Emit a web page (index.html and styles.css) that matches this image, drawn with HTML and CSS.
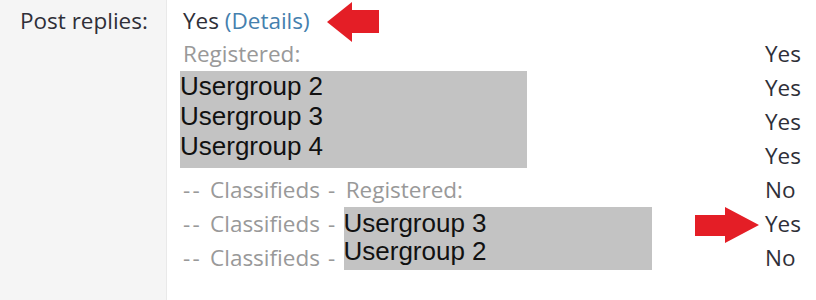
FILE: index.html
```html
<!DOCTYPE html>
<html lang="en">
<head>
<meta charset="utf-8">
<title>Post replies permissions</title>
<link rel="stylesheet" href="styles.css">
</head>
<body>
<div class="perm">
  <div class="perm-label">Post replies:</div>
  <div class="perm-body">
    <div class="perm-head">
      Yes <a class="details" href="#">(Details)</a>
      <svg class="arrow arrow-left" width="52" height="40" viewBox="0 0 52 40" aria-hidden="true">
        <path d="M0 20 L25 0 L25 8 L52 8 L52 31 L25 31 L25 40 Z" fill="#e41e26"/>
      </svg>
    </div>
    <div class="rows">
      <div class="name">Registered:</div><div class="val">Yes</div>
      <div class="name">
        <span class="mask mask-a">Usergroup 2<br>Usergroup 3<br>Usergroup 4</span>
      </div><div class="val">Yes</div>
      <div class="name"></div><div class="val">Yes</div>
      <div class="name"></div><div class="val">Yes</div>
      <div class="name sub"><span class="dash">--</span> Classifieds <span class="dash">-</span> Registered:</div><div class="val">No</div>
      <div class="name sub"><span class="dash">--</span> Classifieds <span class="dash">-</span> <span class="mask mask-b">Usergroup 3<br>Usergroup 2</span></div>
      <div class="val">
        <svg class="arrow arrow-right" width="64" height="36" viewBox="0 0 64 36" aria-hidden="true">
          <path d="M0 8 L30 8 L30 0 L64 18 L30 36 L30 29 L0 29 Z" fill="#e41e26"/>
        </svg>Yes</div>
      <div class="name sub"><span class="dash">--</span> Classifieds <span class="dash">-</span> </div><div class="val">No</div>
    </div>
  </div>
</div>
</body>
</html>
```
FILE: styles.css
```css
html, body {
  margin: 0;
  padding: 0;
  background: #ffffff;
}

body {
  font-family: "Open Sans", "Noto Sans", sans-serif;
  font-size: 22.5px;
  color: #2f2f38;
}

.perm {
  display: flex;
  height: 300px;
}

.perm-label {
  width: 146px;
  padding: 5px 0 0 20px;
  line-height: 32px;
  background: #f5f5f5;
  border-right: 1px solid #e9e9e9;
  white-space: nowrap;
}

.perm-body {
  flex: 1;
  padding: 5px 0 0 16px;
}

.perm-head {
  position: relative;
  line-height: 32px;
  white-space: nowrap;
}

.details {
  color: #4580ae;
  text-decoration: none;
}

.arrow {
  position: absolute;
  display: block;
}

.arrow-left {
  left: 144px;
  top: -3px;
}

.rows {
  display: grid;
  grid-template-columns: 1fr 51px;
  grid-auto-rows: 34px;
  line-height: 34px;
}

.name {
  position: relative;
  color: #999999;
  white-space: nowrap;
}

.sub {
  word-spacing: 2.3px;
}

.dash {
  letter-spacing: 2.2px;
}

.val {
  position: relative;
}

.arrow-right {
  left: -70px;
  top: 0;
}

.mask {
  position: absolute;
  top: 0;
  background: #c3c3c3;
  color: #111111;
  font-family: "Liberation Sans", Arial, sans-serif;
  font-size: 26px;
  word-spacing: 0;
  white-space: nowrap;
}

.mask-a {
  left: -3px;
  width: 347px;
  height: 97px;
  line-height: 30px;
}

.mask-b {
  margin-left: 6px;
  width: 308px;
  height: 61px;
  padding-top: 2px;
  line-height: 28px;
}
```
